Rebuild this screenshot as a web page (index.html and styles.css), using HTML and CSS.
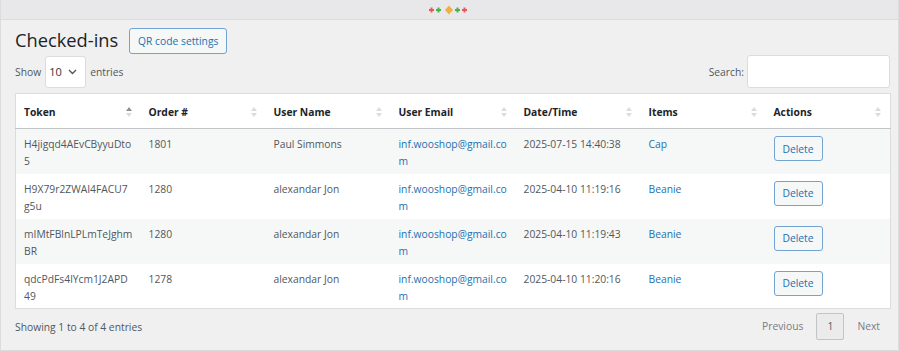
FILE: index.html
```html
<!DOCTYPE html>
<html>
<head>
<meta charset="utf-8">
<link rel="stylesheet" href="styles.css">
</head>
<body>
<div class="frame">
  <div class="topbar">
    <svg class="deco" width="42" height="10" viewBox="0 0 42 10">
      <path d="M1 5h5M3.5 2.5v5" stroke="#e85a5a" stroke-width="2"/>
      <path d="M8 5h5M10.5 2.5v5" stroke="#4caf50" stroke-width="2"/>
      <path d="M21 0.5l4 4.5-4 4.5-4-4.5z" fill="#f0b040"/>
      <path d="M27 5h5M29.5 2.5v5" stroke="#4caf50" stroke-width="2"/>
      <path d="M34 5h5M36.5 2.5v5" stroke="#e85a5a" stroke-width="2"/>
    </svg>
  </div>
  <div class="content">
    <div class="head">
      <h1 class="title">Checked-ins</h1>
      <button class="btn-outline">QR code settings</button>
    </div>
    <div class="controls">
      <div class="length">
        <span>Show</span>
        <div class="select"><span>10</span>
          <svg width="9" height="6" viewBox="0 0 9 6"><path d="M1 1l3.5 3.5L8 1" fill="none" stroke="#50575e" stroke-width="1.4"/></svg>
        </div>
        <span>entries</span>
      </div>
      <div class="search">
        <span>Search:</span>
        <div class="input"></div>
      </div>
    </div>
    <table class="grid">
      <thead>
        <tr>
          <th><div class="th">Token<span class="sort asc"><i class="up"></i><i class="down"></i></span></div></th>
          <th><div class="th">Order #<span class="sort"><i class="up"></i><i class="down"></i></span></div></th>
          <th><div class="th">User Name<span class="sort"><i class="up"></i><i class="down"></i></span></div></th>
          <th><div class="th">User Email<span class="sort"><i class="up"></i><i class="down"></i></span></div></th>
          <th><div class="th">Date/Time<span class="sort"><i class="up"></i><i class="down"></i></span></div></th>
          <th><div class="th">Items<span class="sort"><i class="up"></i><i class="down"></i></span></div></th>
          <th><div class="th">Actions<span class="sort"><i class="up"></i><i class="down"></i></span></div></th>
        </tr>
      </thead>
      <tbody>
        <tr class="odd">
          <td>H4jigqd4AEvCByyuDto<br>5</td><td>1801</td><td>Paul Simmons</td>
          <td><a>inf.wooshop@gmail.co<br>m</a></td><td>2025-07-15 14:40:38</td><td><a>Cap</a></td>
          <td><button class="btn-del">Delete</button></td>
        </tr>
        <tr>
          <td>H9X79r2ZWAI4FACU7<br>g5u</td><td>1280</td><td>alexandar Jon</td>
          <td><a>inf.wooshop@gmail.co<br>m</a></td><td>2025-04-10 11:19:16</td><td><a>Beanie</a></td>
          <td><button class="btn-del">Delete</button></td>
        </tr>
        <tr class="odd">
          <td>mIMtFBlnLPLmTeJghm<br>BR</td><td>1280</td><td>alexandar Jon</td>
          <td><a>inf.wooshop@gmail.co<br>m</a></td><td>2025-04-10 11:19:43</td><td><a>Beanie</a></td>
          <td><button class="btn-del">Delete</button></td>
        </tr>
        <tr>
          <td>qdcPdFs4lYcm1J2APD<br>49</td><td>1278</td><td>alexandar Jon</td>
          <td><a>inf.wooshop@gmail.co<br>m</a></td><td>2025-04-10 11:20:16</td><td><a>Beanie</a></td>
          <td><button class="btn-del">Delete</button></td>
        </tr>
      </tbody>
    </table>
    <div class="footer">
      <span class="info">Showing 1 to 4 of 4 entries</span>
      <div class="pager">
        <span class="pg">Previous</span>
        <span class="pg current">1</span>
        <span class="pg">Next</span>
      </div>
    </div>
  </div>
</div>
</body>
</html>
```
FILE: styles.css
```css
* { box-sizing: border-box; }
html, body { margin: 0; padding: 0; }
body {
  font-family: "Open Sans", "Noto Sans", sans-serif;
  font-size: 10.3px;
  color: #50575e;
  background: #f0f0f1;
}
.frame {
  width: 899px;
  height: 351px;
  border: 1px solid #dcdcde;
  border-top: none;
  background: #f0f0f1;
  overflow: hidden;
}
.topbar {
  height: 20px;
  background: #e8e8ea;
  border-bottom: 1px solid #dcdcde;
  display: flex;
  justify-content: center;
  align-items: center;
  padding-right: 2px;
}
.deco { display: block; margin-top: 1px; }
.content { padding: 7px 8px 0 14px; }
.head { display: flex; align-items: center; gap: 11px; height: 26px; }
.title {
  margin: 0;
  font-size: 18.3px;
  font-weight: 400;
  color: #1d2327;
  line-height: 26px;
}
.btn-outline {
  font-family: inherit;
  font-size: 10.3px;
  color: #2271b1;
  background: #f6f7f7;
  border: 1px solid #72a4d2;
  border-radius: 3px;
  height: 26px;
  width: 98px;
  padding: 0;
  margin-top: 1px;
}
.controls {
  display: flex;
  justify-content: space-between;
  align-items: center;
  margin-top: 1px;
  height: 35px;
}
.length { display: flex; align-items: center; gap: 4px; color: #50575e; }
.select {
  width: 41px;
  height: 32px;
  background: #fff;
  border: 1px solid #dcdcde;
  border-radius: 3px;
  display: flex;
  align-items: center;
  justify-content: space-between;
  padding: 0 8px 0 3px;
  color: #2c3338;
  font-size: 11px;
}
.search { display: flex; align-items: center; gap: 3px; }
.input {
  width: 143px;
  height: 33px;
  background: #fff;
  border: 1px solid #dcdcde;
  border-radius: 3px;
}
.grid {
  margin-top: 4px;
  width: 875px;
  border-collapse: collapse;
  table-layout: fixed;
  background: #fff;
  border: 1px solid #dcdcde;
}
.grid th {
  width: 125px;
  text-align: left;
  font-weight: 700;
  color: #1d2327;
  padding: 10px 8px 8px 8px;
  line-height: 16px;
  border-bottom: 1px solid #c3c4c7;
}
.th { display: flex; justify-content: space-between; align-items: center; }
.sort { display: flex; flex-direction: column; gap: 2px; margin-right: 1px; }
.sort i {
  display: block;
  width: 0; height: 0;
  border-left: 3.5px solid transparent;
  border-right: 3.5px solid transparent;
}
.sort .up { border-bottom: 4px solid #dcdcde; }
.sort .down { border-top: 4px solid #dcdcde; }
.sort.asc .up { border-bottom-color: #8c8f94; }
.grid td {
  vertical-align: top;
  padding: 7px 8px 3px 8px;
  line-height: 17px;
  height: 45px;
  color: #50575e;
  white-space: nowrap;
}
.grid tr.odd td { background: #f6f7f7; }
.grid a { color: #2271b1; }
.btn-del {
  font-family: inherit;
  font-size: 10.3px;
  color: #2271b1;
  background: #f6f7f7;
  border: 1px solid #72a4d2;
  border-radius: 3px;
  width: 49px;
  height: 25px;
  padding: 0;
  margin-top: 0;
}
.footer {
  display: flex;
  justify-content: space-between;
  align-items: center;
  margin-top: 3px;
  height: 28px;
}
.info { color: #50575e; padding-top: 1px; }
.pager { display: flex; align-items: center; margin-right: 10px; }
.pg { color: #787c82; }
.pg.current {
  color: #50575e;
  background: #ebebec;
  border: 1px solid #c3c4c7;
  border-radius: 2px;
  width: 28px;
  height: 27px;
  display: flex;
  align-items: center;
  justify-content: center;
  margin: 0 13px;
}
```
